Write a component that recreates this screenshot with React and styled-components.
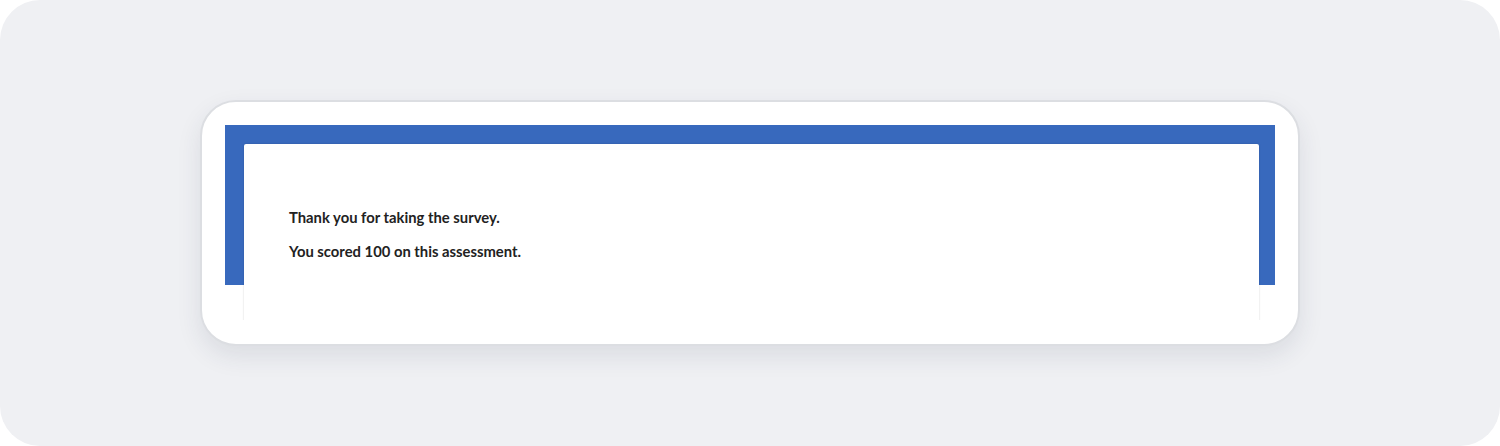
import React from "react";
import styled, { createGlobalStyle } from "styled-components";

const Global = createGlobalStyle`
  html, body { margin: 0; padding: 0; background: #ffffff; }
  body { font-family: Lato, "Liberation Sans", sans-serif; }
`;

const Stage = styled.div`
  width: 1500px;
  height: 446px;
  box-sizing: border-box;
  background: #eff0f3;
  border-radius: 40px;
  display: flex;
  justify-content: center;
  padding-top: 100px;
`;

const Card = styled.div`
  width: 1100px;
  height: 246px;
  box-sizing: border-box;
  background: #ffffff;
  border: 2px solid #dcdee2;
  border-radius: 36px;
  box-shadow: 0 10px 24px rgba(40, 50, 80, 0.10);
  padding: 23px 23px 0 23px;
`;

const Frame = styled.div`
  height: 195px;
  overflow: hidden;
  background: #ffffff;
`;

const Banner = styled.div`
  height: 160px;
  box-sizing: border-box;
  background: #3869bd;
  padding: 19px 16px 0 19px;
`;

const Panel = styled.div`
  background: #ffffff;
  height: 300px;
  box-shadow: 0 0 2px rgba(0, 0, 0, 0.2);
  border-radius: 2px;
  padding: 64px 45px 0 45px;
  box-sizing: border-box;
`;

const Message = styled.p`
  margin: 0 0 16px 0;
  font-family: Lato, "Liberation Sans", sans-serif;
  font-weight: 700;
  font-size: 14.8px;
  line-height: 18px;
  color: #222222;
`;

export default function App() {
  return (
    <>
      <Global />
      <Stage>
        <Card>
          <Frame>
            <Banner>
              <Panel>
                <Message>Thank you for taking the survey.</Message>
                <Message>You scored 100 on this assessment.</Message>
              </Panel>
            </Banner>
          </Frame>
        </Card>
      </Stage>
    </>
  );
}
